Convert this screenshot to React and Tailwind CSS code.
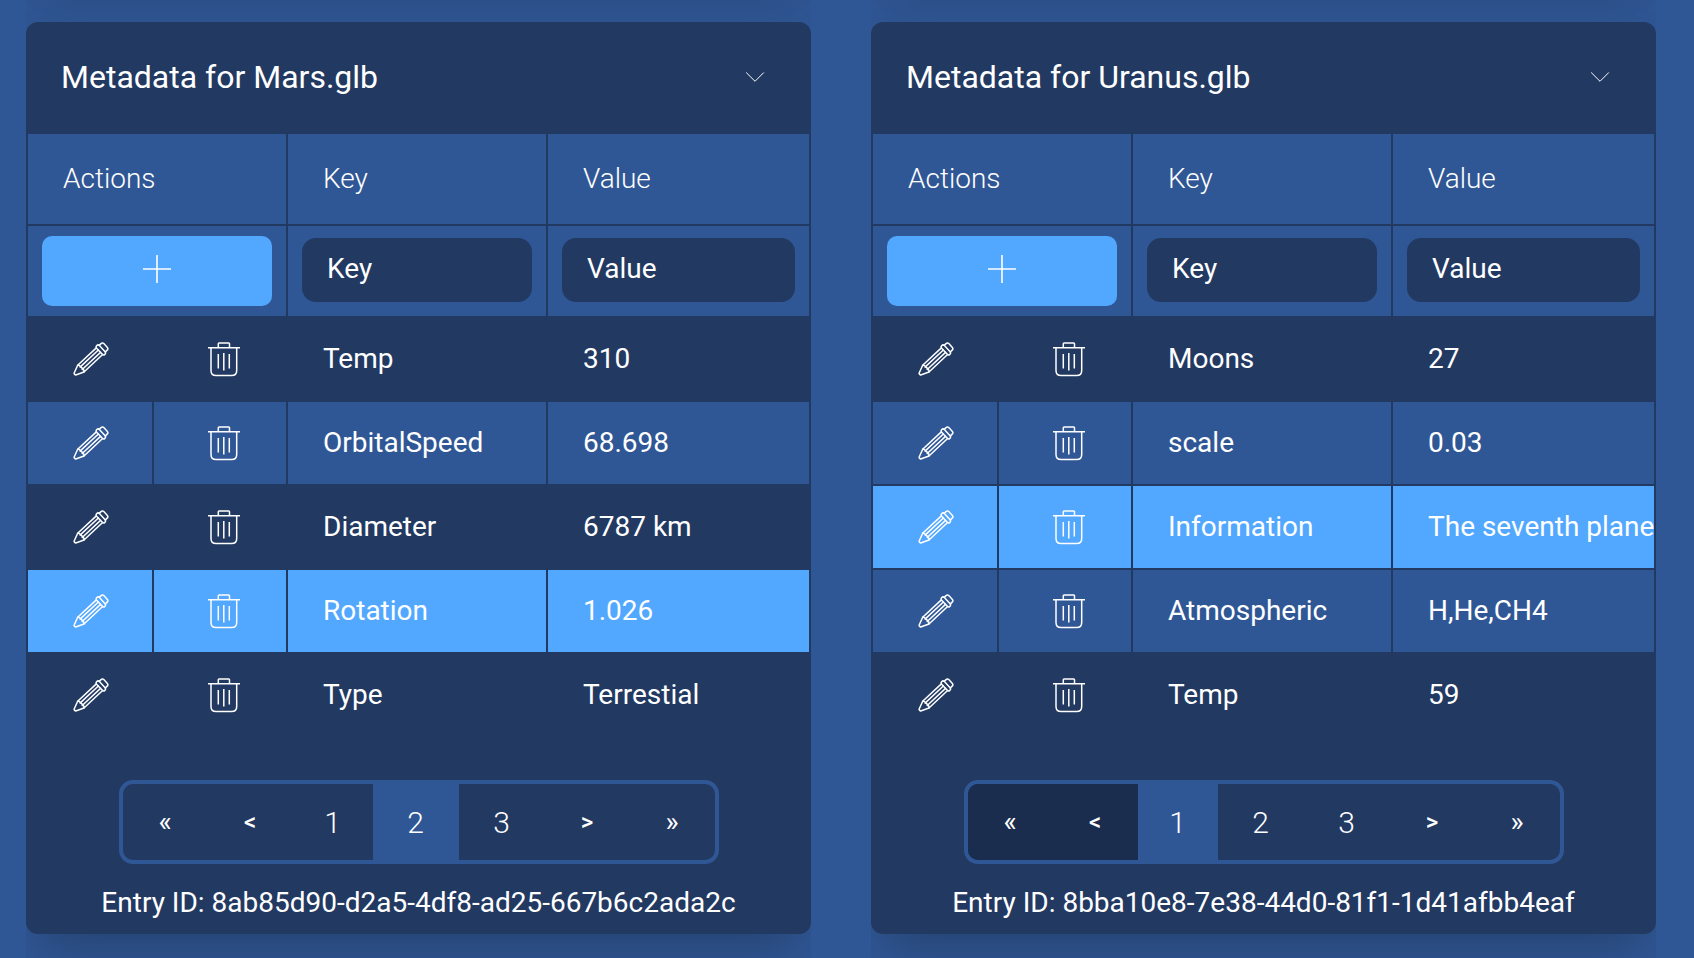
import { useState } from "react";

const cards = [
  {
    file: "Mars.glb",
    page: 2,
    entryId: "8ab85d90-d2a5-4df8-ad25-667b6c2ada2c",
    rows: [
      { key: "Temp", value: "310", tone: "dark" },
      { key: "OrbitalSpeed", value: "68.698", tone: "mid" },
      { key: "Diameter", value: "6787 km", tone: "dark" },
      { key: "Rotation", value: "1.026", tone: "bright" },
      { key: "Type", value: "Terrestial", tone: "dark" },
    ],
  },
  {
    file: "Uranus.glb",
    page: 1,
    entryId: "8bba10e8-7e38-44d0-81f1-1d41afbb4eaf",
    rows: [
      { key: "Moons", value: "27", tone: "dark" },
      { key: "scale", value: "0.03", tone: "mid" },
      { key: "Information", value: "The seventh plane", tone: "bright" },
      { key: "Atmospheric", value: "H,He,CH4", tone: "mid" },
      { key: "Temp", value: "59", tone: "dark" },
    ],
  },
];

const tones = {
  dark: "bg-[#223962]",
  mid: "bg-[#305795]",
  bright: "bg-[#52a7ff]",
};

function PencilIcon() {
  return (
    <svg viewBox="0 0 36 36" className="size-9" fill="none" stroke="currentColor" strokeWidth="1.5" strokeLinejoin="round" strokeLinecap="round" aria-hidden="true">
      <g transform="translate(1.6 33.4) rotate(-43)">
        <path d="M34 -4.6H8.5L0.4 -1.2Q-0.3 0 0.4 1.2L8.5 4.6H34" />
        <path d="M8.5 -4.6Q10.6 -3 9 -1.6Q10.6 0 9 1.6Q10.6 3 8.5 4.6" />
        <path d="M10 -1.6H34M10 1.6H34" />
        <rect x="34" y="-6" width="3.8" height="12" rx="1.8" />
        <path d="M37.8 -4.5H40Q42.4 -4.5 42.4 -2.3V2.3Q42.4 4.5 40 4.5H37.8" />
      </g>
    </svg>
  );
}

function TrashIcon() {
  return (
    <svg viewBox="0 0 36 36" className="size-9" fill="none" stroke="currentColor" strokeWidth="1.5" strokeLinejoin="round" aria-hidden="true">
      <path d="M2 6.8H34M12.3 6.8V2.8Q12.3 2 13.1 2H22.7Q23.5 2 23.5 2.8V6.8" />
      <path d="M5 6.8V29.5Q5 34.6 10.1 34.6H25.6Q30.7 34.6 30.7 29.5V6.8" />
      <path d="M12.3 13V27.5M17.8 12V29.5M23.3 13V27.5" />
    </svg>
  );
}

function PlusIcon() {
  return (
    <svg viewBox="0 0 28 28" className="size-7" fill="none" stroke="currentColor" strokeWidth="1.6" aria-hidden="true">
      <path d="M14 0V28M0 14H28" />
    </svg>
  );
}

function ChevronIcon() {
  return (
    <svg viewBox="0 0 20 12" className="h-3 w-5" fill="none" stroke="currentColor" strokeWidth="1" aria-hidden="true">
      <path d="M1.2 1.5L10 10.3L18.8 1.5" />
    </svg>
  );
}

function Pager({ page, onChange }) {
  const first = page === 1;
  const last = page === 3;
  const items = [
    { text: "«", label: "First page", to: 1, off: first, size: "w-[85px] text-[28px]" },
    { text: "<", label: "Previous page", to: page - 1, off: first, size: "w-[85px] text-2xl font-medium" },
    { text: "1", label: "Page 1", to: 1, size: "w-20 text-[30px] font-light" },
    { text: "2", label: "Page 2", to: 2, size: "w-[86px] text-[30px] font-light" },
    { text: "3", label: "Page 3", to: 3, size: "w-[86px] text-[30px] font-light" },
    { text: ">", label: "Next page", to: page + 1, off: last, size: "w-[85px] text-2xl font-medium" },
    { text: "»", label: "Last page", to: 3, off: last, size: "w-[85px] text-[28px]" },
  ];
  return (
    <nav aria-label="Pagination" className="mx-auto mt-[42px] flex w-fit overflow-hidden rounded-[14px] border-4 border-[#305795]">
      {items.map((item) => {
        const current = item.text === String(page);
        return (
          <button
            key={item.label}
            type="button"
            aria-label={item.label}
            aria-current={current ? "page" : undefined}
            disabled={item.off}
            onClick={() => onChange(item.to)}
            className={`h-[76px] ${item.size} ${current ? "bg-[#305795]" : item.off ? "bg-[#1a2d4e]" : ""}`}
          >
            {item.text}
          </button>
        );
      })}
    </nav>
  );
}

function MetadataCard({ card }) {
  const [page, setPage] = useState(card.page);
  return (
    <section className="rounded-xl bg-[#223962] pb-[11px] shadow-2xl">
      <header className="flex h-[110px] items-center justify-between pr-[46px] pl-[35px]">
        <h2 className="text-[32px] leading-10">Metadata for {card.file}</h2>
        <button type="button" aria-label={`Collapse ${card.file}`}>
          <ChevronIcon />
        </button>
      </header>
      <table className="w-full table-fixed border-separate border-spacing-[2px] text-left">
        <colgroup>
          <col className="w-[124px]" />
          <col className="w-[132px]" />
          <col className="w-[258px]" />
          <col />
        </colgroup>
        <thead>
          <tr className="h-[90px]">
            <th colSpan={2} className="bg-[#305795] px-[35px] font-light">Actions</th>
            <th className="bg-[#305795] px-[35px] font-light">Key</th>
            <th className="bg-[#305795] px-[35px] font-light">Value</th>
          </tr>
        </thead>
        <tbody>
          <tr className="h-[90px]">
            <td colSpan={2} className="bg-[#305795] px-[14px] py-0">
              <button type="button" aria-label="Add entry" className="flex h-[70px] w-full items-center justify-center rounded-[10px] bg-[#52a7ff] pb-1">
                <PlusIcon />
              </button>
            </td>
            {["Key", "Value"].map((name) => (
              <td key={name} className="bg-[#305795] px-[14px] pt-0 pb-[2px]">
                <input
                  type="text"
                  aria-label={name}
                  placeholder={name}
                  className="block h-16 w-full rounded-[14px] border-4 border-[#223962] bg-[#223962] px-[21px] pb-1 text-white outline-none placeholder:text-white placeholder:opacity-100"
                />
              </td>
            ))}
          </tr>
          {card.rows.map((row) => (
            <tr key={row.key} className="h-[82px]">
              <td className={`py-0 pr-0 pl-[2px] ${tones[row.tone]}`}>
                <button type="button" aria-label={`Edit ${row.key}`} className="mx-auto block">
                  <PencilIcon />
                </button>
              </td>
              <td className={`py-0 pr-0 pl-2 ${tones[row.tone]}`}>
                <button type="button" aria-label={`Delete ${row.key}`} className="mx-auto block">
                  <TrashIcon />
                </button>
              </td>
              <td className={`overflow-hidden py-0 pr-0 pl-[35px] whitespace-nowrap ${tones[row.tone]}`}>{row.key}</td>
              <td className={`overflow-hidden py-0 pr-0 pl-[35px] whitespace-nowrap ${tones[row.tone]}`}>{row.value}</td>
            </tr>
          ))}
        </tbody>
      </table>
      <Pager page={page} onChange={setPage} />
      <p className="mt-[19px] text-center leading-10">Entry ID: {card.entryId}</p>
    </section>
  );
}

export default function App() {
  return (
    <main className="grid min-h-screen grid-cols-2 gap-[60px] bg-[#305795] pr-[38px] pl-[26px] font-['Roboto',sans-serif] text-[28px] text-white">
      {cards.map((card) => (
        <div key={card.file} className="overflow-hidden pb-6">
          <div aria-hidden="true" className="-mt-[410px] mb-12 h-96 rounded-xl bg-[#223962] shadow-2xl" />
          <MetadataCard card={card} />
        </div>
      ))}
    </main>
  );
}
